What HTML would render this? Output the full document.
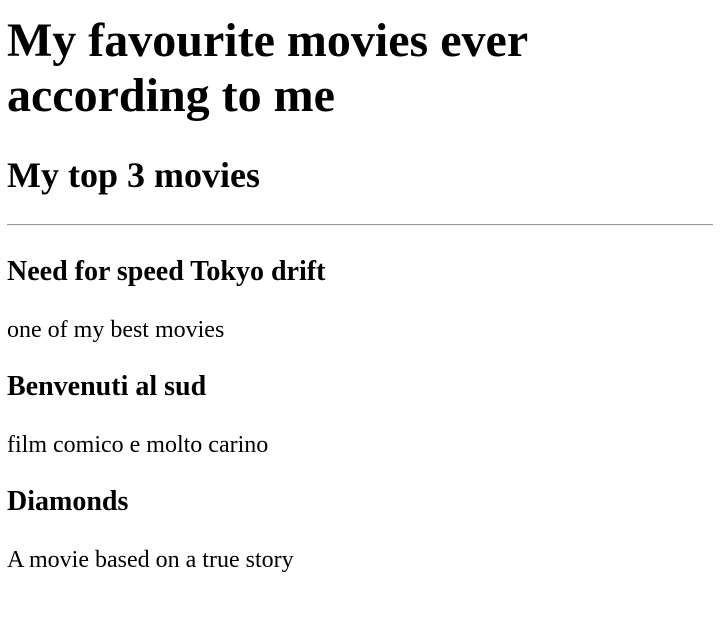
<!DOCTYPE html>
<html>
<head>
<meta charset="utf-8">
<style>
html,body{margin:0;padding:0;background:#fff;}
body{padding:13px 8px 0 7px;font-family:"Liberation Serif","Times New Roman",serif;color:#000;}
h1{font-size:48px;font-weight:bold;margin:0 0 32px 0;line-height:55px;}
h2{font-size:36px;font-weight:bold;margin:31px 0 28px 0;line-height:41px;}
hr{margin:12px 0;border:0;border-top:1px solid #9a9a9a;border-bottom:1px solid #eee;height:0;}
h3{font-size:28px;font-weight:bold;margin:27.6px 0;line-height:32px;}
hr + h3{margin-top:30px;}
p{font-size:24px;margin:24px 0;line-height:28px;}
</style>
</head>
<body>
<h1>My favourite movies ever according to me</h1>
<h2>My top 3 movies</h2>
<hr>
<h3>Need for speed Tokyo drift</h3>
<p>one of my best movies</p>
<h3>Benvenuti al sud</h3>
<p>film comico e molto carino</p>
<h3>Diamonds</h3>
<p>A movie based on a true story</p>
</body>
</html>
